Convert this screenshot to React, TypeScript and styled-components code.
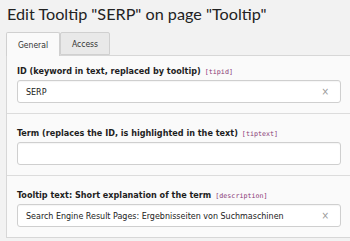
import React from "react";
import styled, { createGlobalStyle } from "styled-components";

const GlobalStyle = createGlobalStyle`
    html, body {
        margin: 0;
        padding: 0;
        background: #f2f2f2;
        overflow: hidden;
    }
    body {
        font-family: "DejaVu Sans Condensed", "DejaVu Sans", Verdana, sans-serif;
        color: #222;
    }
`;

const Page = styled.div`
    width: 360px;
    padding: 0 0 0 6px;
`;

const Title = styled.h1`
    margin: 0;
    padding: 5px 0 0 1px;
    height: 26px;
    font-family: "Lato", "Open Sans", sans-serif;
    font-weight: 400;
    font-size: 16.2px;
    line-height: 18px;
    color: #222;
    white-space: nowrap;
`;

const TabBar = styled.div`
    display: flex;
    align-items: flex-end;
    height: 24px;
`;

const Tab = styled.div<{ $active?: boolean }>`
    display: flex;
    align-items: center;
    justify-content: center;
    box-sizing: border-box;
    height: ${p => (p.$active ? "24px" : "23px")};
    padding: 0 10px;
    min-width: ${p => (p.$active ? "54px" : "50px")};
    margin-bottom: ${p => (p.$active ? "-1px" : "0")};
    font-size: 8.5px;
    color: #333;
    background: ${p => (p.$active ? "#fafafa" : "#e9e9e9")};
    border: 1px solid #d0d0d0;
    border-bottom: ${p => (p.$active ? "none" : "1px solid #d0d0d0")};
    border-radius: 2px 2px 0 0;
    position: relative;
    z-index: ${p => (p.$active ? 1 : 0)};
`;

const Panel = styled.div`
    background: #fafafa;
    border: 1px solid #d7d7d7;
`;

const Section = styled.div<{ $first?: boolean }>`
    padding: ${p => (p.$first ? "9px" : "13px")} 24px 10px 10px;
    border-top: ${p => (p.$first ? "none" : "1px solid #dcdcdc")};
`;

const Label = styled.div`
    display: flex;
    align-items: baseline;
    gap: 4px;
    height: 12px;
    line-height: 12px;
    margin-bottom: 3px;
    font-size: 9px;
    font-weight: 700;
    color: #1e1e1e;
    white-space: nowrap;
`;

const FieldName = styled.code`
    font-family: "DejaVu Sans Mono", "Liberation Mono", monospace;
    font-size: 6.7px;
    font-weight: 400;
    color: #8a3a78;
`;

const InputBox = styled.div`
    display: flex;
    align-items: center;
    box-sizing: border-box;
    height: 23px;
    padding: 0 11px 0 8px;
    background: #fff;
    border: 1px solid #cfcfcf;
    border-radius: 3px;
    box-shadow: inset 0 1px 1px rgba(0, 0, 0, 0.04);
`;

const InputText = styled.span`
    flex: 1;
    font-size: 8.9px;
    color: #222;
    white-space: nowrap;
`;

const ClearIcon = styled.span`
    font-size: 10px;
    line-height: 1;
    color: #9a9a9a;
`;

type Field = {
    label: string;
    name: string;
    value: string;
};

const fields: Field[] = [
    { label: "ID (keyword in text, replaced by tooltip)", name: "[tipid]", value: "SERP" },
    { label: "Term (replaces the ID, is highlighted in the text)", name: "[tiptext]", value: "" },
    {
        label: "Tooltip text: Short explanation of the term",
        name: "[description]",
        value: "Search Engine Result Pages: Ergebnisseiten von Suchmaschinen",
    },
];

export default function App() {
    return (
        <Page>
            <GlobalStyle />
            <Title>Edit Tooltip "SERP" on page "Tooltip"</Title>
            <TabBar>
                <Tab $active>General</Tab>
                <Tab>Access</Tab>
            </TabBar>
            <Panel>
                {fields.map((f, i) => (
                    <Section key={f.name} $first={i === 0}>
                        <Label>
                            {f.label}
                            <FieldName>{f.name}</FieldName>
                        </Label>
                        <InputBox>
                            <InputText>{f.value}</InputText>
                            {f.value && <ClearIcon>×</ClearIcon>}
                        </InputBox>
                    </Section>
                ))}
            </Panel>
        </Page>
    );
}
